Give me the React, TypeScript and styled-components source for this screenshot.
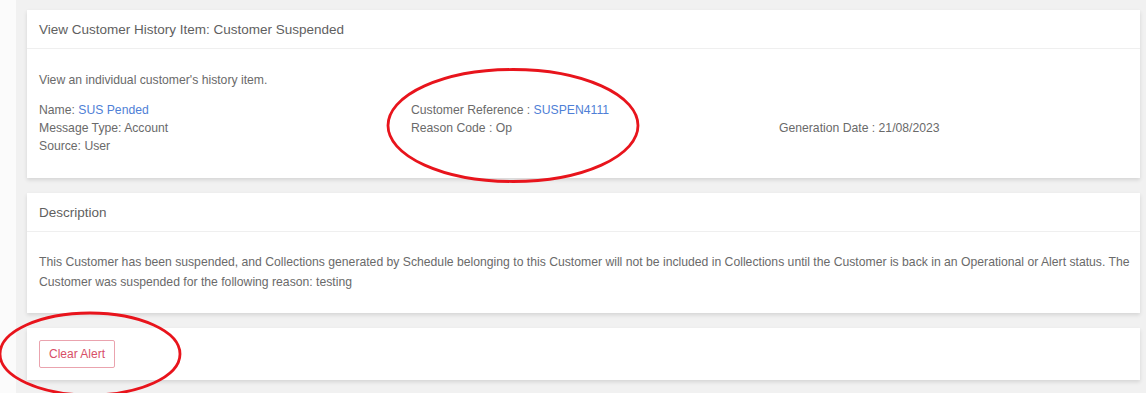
import styled, { createGlobalStyle } from 'styled-components';

const GlobalStyle = createGlobalStyle`
  html, body {
    margin: 0;
    padding: 0;
    background: #f1f1f1;
    font-family: "Liberation Sans", Arial, sans-serif;
  }
`;

const Page = styled.div`
  position: relative;
  display: flex;
  width: 1146px;
  height: 393px;
  overflow: hidden;
  background: #f1f1f1;
`;

const SideStrip = styled.div`
  width: 16px;
  flex-shrink: 0;
  background: #fbfbfb;
`;

const Main = styled.main`
  flex: 1;
  display: flex;
  flex-direction: column;
  gap: 15px;
  padding: 10px 6px 0 11px;
`;

const Card = styled.section`
  background: #fff;
  box-shadow: 0 2px 4px rgba(0, 0, 0, 0.12);
`;

const CardHeader = styled.header`
  height: 39px;
  display: flex;
  align-items: center;
  padding: 0 12px;
  border-bottom: 1px solid #efefef;
  box-sizing: border-box;
  font-size: 13.5px;
  color: #5f5f5f;
`;

const CardBody = styled.div<{ $pad: string }>`
  padding: ${({ $pad }) => $pad};
  font-size: 12.2px;
  color: #6a6a6a;
`;

const Intro = styled.p`
  margin: 0 0 12px;
  line-height: 18px;
`;

const Columns = styled.div`
  display: grid;
  grid-template-columns: 372px 368px 1fr;
`;

const Column = styled.div`
  display: flex;
  flex-direction: column;
`;

const Line = styled.div`
  height: 18px;
  line-height: 18px;
  white-space: nowrap;
`;

const Link = styled.a`
  color: #4f7fd6;
  text-decoration: none;
`;

const Paragraph = styled.p`
  margin: 0;
  line-height: 20px;
`;

const OutlineButton = styled.button`
  height: 28px;
  padding: 0 9px;
  background: #fff;
  border: 1px solid #eaa3ae;
  border-radius: 2px;
  color: #d84f67;
  font-family: inherit;
  font-size: 12px;
`;

const Annotations = styled.svg`
  position: absolute;
  left: 0;
  top: 0;
  pointer-events: none;
`;

const App = () => (
  <>
    <GlobalStyle />
    <Page>
      <SideStrip />
      <Main>
        <Card>
          <CardHeader>View Customer History Item: Customer Suspended</CardHeader>
          <CardBody $pad="22px 12px 23px">
            <Intro>View an individual customer's history item.</Intro>
            <Columns>
              <Column>
                <Line>
                  Name: <Link href="#">SUS Pended</Link>
                </Line>
                <Line>Message Type: Account</Line>
                <Line>Source: User</Line>
              </Column>
              <Column>
                <Line>
                  Customer Reference : <Link href="#">SUSPEN4111</Link>
                </Line>
                <Line>Reason Code : Op</Line>
              </Column>
              <Column>
                <Line />
                <Line>Generation Date : 21/08/2023</Line>
              </Column>
            </Columns>
          </CardBody>
        </Card>

        <Card>
          <CardHeader>Description</CardHeader>
          <CardBody $pad="20px 4px 21px 12px">
            <Paragraph>
              This Customer has been suspended, and Collections generated by Schedule belonging to
              this Customer will not be included in Collections until the Customer is back in an
              Operational or Alert status. The Customer was suspended for the following reason:
              testing
            </Paragraph>
          </CardBody>
        </Card>

        <Card>
          <CardBody $pad="12px 12px">
            <OutlineButton>Clear Alert</OutlineButton>
          </CardBody>
        </Card>
      </Main>

      <Annotations width="1146" height="393" viewBox="0 0 1146 393">
        <ellipse cx="513" cy="125.5" rx="125" ry="56" fill="none" stroke="#e8141c" strokeWidth="2.8" />
        <ellipse cx="90" cy="354" rx="90" ry="41" fill="none" stroke="#e8141c" strokeWidth="2.8" />
      </Annotations>
    </Page>
  </>
);

export default App;
